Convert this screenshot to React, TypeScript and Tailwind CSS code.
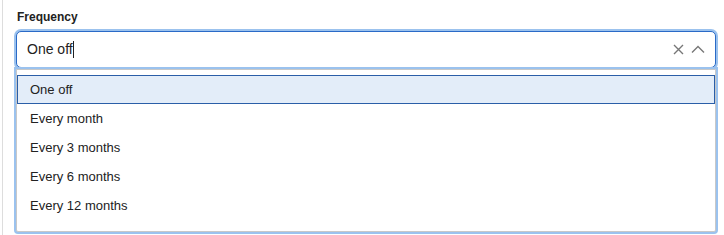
import React from "react";

const options = ["One off", "Every month", "Every 3 months", "Every 6 months", "Every 12 months"];

export default function App() {
  return (
    <div className="w-[724px] h-[235px] bg-white" style={{ fontFamily: "'Liberation Sans', Arial, sans-serif" }}>
      <div className="ml-[2px] h-full border-l border-[#dddddd] pl-[13px] pr-[8px] pt-[9px]">
        <div className="text-[12px] font-bold text-[#222] leading-[16px] pl-[1px]">Frequency</div>
        <div className="mt-[6px]">
          <div className="flex items-center h-[37px] rounded-[5px] border border-[#2a6ac7] ring-2 ring-[#9bc2ee] bg-white pl-[10px] pr-[10px]">
            <span className="text-[14px] text-[#222]">One off</span>
            <span className="w-px h-[17px] bg-[#222]"></span>
            <div className="flex-1" />
            <svg width="11" height="11" viewBox="0 0 11 11" className="mr-[7px]">
              <path d="M1 1 L10 10 M10 1 L1 10" stroke="#777" strokeWidth="1.4" />
            </svg>
            <svg width="14" height="9" viewBox="0 0 14 9">
              <path d="M1 7.5 L7 1.5 L13 7.5" stroke="#777" strokeWidth="1.4" fill="none" />
            </svg>
          </div>
          <div className="mt-[1px] border border-[#c8c8c8] ring-2 ring-[#9bc2ee] rounded-b-[2px] bg-white pt-[5px] pb-[11px]">
            {options.map((o, i) => (
              <div
                key={o}
                className={
                  "h-[29px] flex items-center pl-[12px] text-[13px] text-[#222] border " +
                  (i === 0 ? "bg-[#e3edf9] border-[#2a5ea8]" : "border-transparent")
                }
              >
                {o}
              </div>
            ))}
          </div>
        </div>
      </div>
    </div>
  );
}
